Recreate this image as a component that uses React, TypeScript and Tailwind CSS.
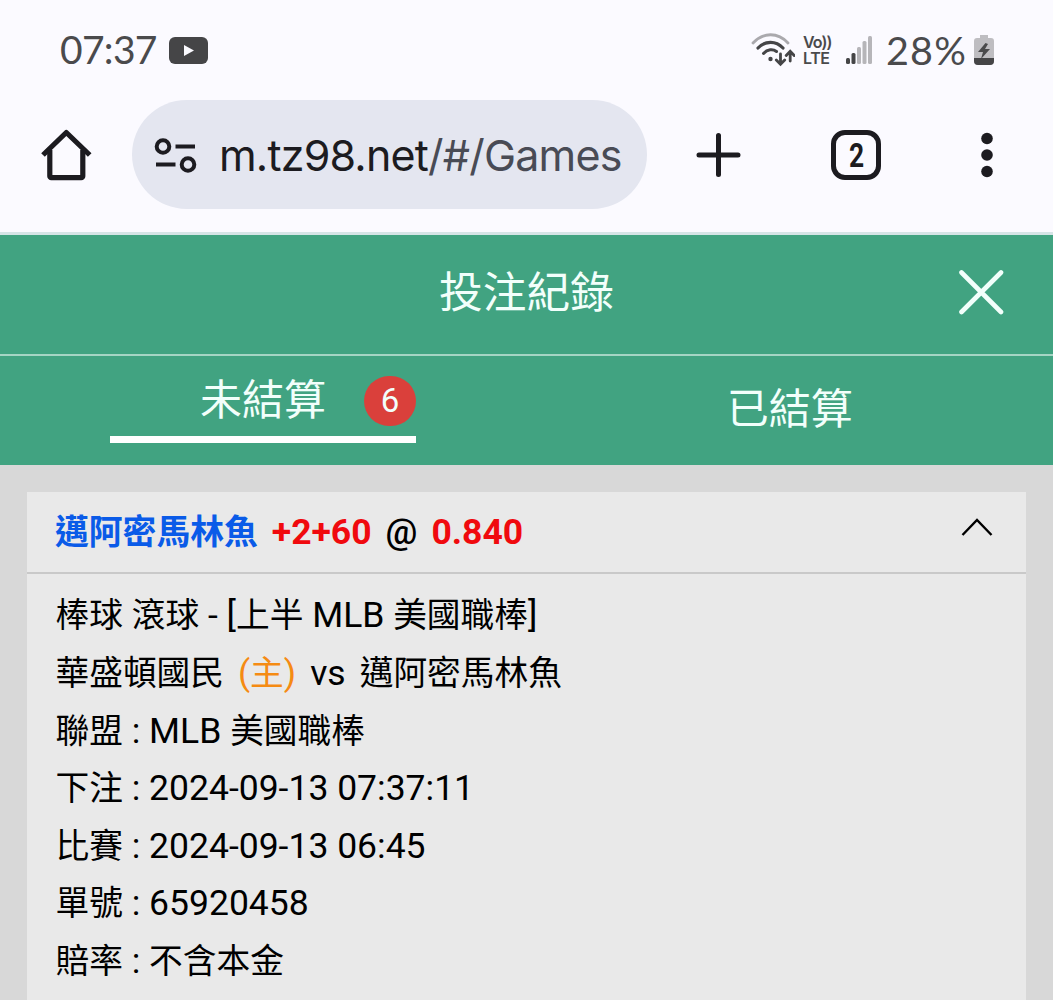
import { Fragment, ReactNode } from 'react';

const details = [
  { label: '聯盟', value: 'MLB 美國職棒' },
  { label: '下注', value: '2024-09-13 07:37:11' },
  { label: '比賽', value: '2024-09-13 06:45' },
  { label: '單號', value: '65920458' },
  { label: '賠率', value: '不含本金' },
];

// Han characters are set slightly smaller than the Latin text beside them
function Mixed({ text }: { text: string }) {
  return (
    <>
      {text.split(/([\u4e00-\u9fff]+)/).map((part, i) =>
        i % 2 ? <span key={i} className="text-[33.7px]">{part}</span> : <Fragment key={i}>{part}</Fragment>
      )}
    </>
  );
}

function Row({ children }: { children: ReactNode }) {
  return <div className="h-[57.6px] leading-[57.6px] whitespace-pre">{children}</div>;
}

function StatusBar() {
  return (
    <div className="h-[100px] pl-[60px] pr-[58px] flex items-center justify-between text-[#4a4a4c] font-['Lato',sans-serif]">
      <div className="flex items-center">
        <span className="w-[109px] text-[39px] leading-none tracking-[-0.7px] pb-px">07:37</span>
        <svg width="39" height="27" viewBox="0 0 39 27">
          <rect width="39" height="27" rx="6" fill="#454547" />
          <path d="M15 8l10 5.500L15 19z" fill="#fbfaff" />
        </svg>
      </div>
      <div className="flex items-center">
        <svg width="44" height="34" viewBox="0 0 44 34" fill="none" strokeLinecap="round">
          <path d="M2 10C12-1 27-1 37 10" stroke="#aaa9ad" strokeWidth="2.800" />
          <path d="M7 15C14 7.500 25 7.500 32 15" stroke="#454547" strokeWidth="3.200" />
          <path d="M12.500 20.500C16.500 16 22 15.800 25.500 18.500" stroke="#454547" strokeWidth="3" />
          <circle cx="19.500" cy="26" r="2.200" fill="#454547" />
          <path d="M29.500 21v10m-4.200-4 4.200 4.200 4.200-4.200M39.200 28V18.500m-4 4 4-4.200 4 4.200" stroke="#454547" strokeWidth="2.800" />
        </svg>
        <div className="ml-2 w-[32px] h-[32px] flex flex-col justify-between text-[16px] leading-[16px] font-semibold font-['Inter',sans-serif] whitespace-nowrap">
          <div className="tracking-[-0.9px]">Vo))</div>
          <div className="tracking-[-0.4px]">LTE</div>
        </div>
        <svg className="ml-[10px]" width="28" height="30" viewBox="0 0 28 30" fill="#b6b5b9">
          <rect x="1" y="23" width="4" height="6" rx="1.5" fill="#454547" />
          <rect x="6.500" y="18" width="4" height="11" rx="1.5" fill="#454547" />
          <rect x="12" y="12" width="4" height="17" rx="1.5" />
          <rect x="17.500" y="6" width="4" height="23" rx="1.5" />
          <rect x="23" y="1" width="4" height="28" rx="1.5" />
        </svg>
        <span className="ml-[13px] w-[87px] text-[39.5px] leading-none tracking-[1.2px] pb-px">28%</span>
        <svg width="22" height="30" viewBox="0 0 22 30">
          <path d="M7 0h8v3h3a3 3 0 0 1 3 3v20a4 4 0 0 1-4 4H5a4 4 0 0 1-4-4V6a3 3 0 0 1 3-3h3z" fill="#bebdc1" />
          <path d="M1 23h20v3a4 4 0 0 1-4 4H5a4 4 0 0 1-4-4z" fill="#454547" />
          <path d="M12.500 8 5 17h5l-2 7 9-10h-5l3-5z" fill="#4a4a4c" />
        </svg>
      </div>
    </div>
  );
}

function BrowserBar() {
  return (
    <div className="h-[135px] border-b-3 border-[#d5e4e6] flex items-start text-[#1c1b20]">
      <svg className="ml-[40px] mt-[28px]" width="52" height="54" viewBox="0 0 52 54" fill="none" stroke="currentColor" strokeWidth="5.200">
        <path d="M3 27 26.300 4.500 49.700 27" strokeLinejoin="round" />
        <path d="M9.800 22v26.200a1.500 1.500 0 0 0 1.500 1.500h30a1.500 1.500 0 0 0 1.500-1.500V22" />
      </svg>
      <div className="ml-[40px] w-[515px] h-[109px] rounded-full bg-[#e4e6f0] flex items-center">
        <svg className="ml-[22px]" width="44" height="38" viewBox="0 0 44 38" fill="none" stroke="currentColor" strokeWidth="4">
          <circle cx="9" cy="10.500" r="6.300" />
          <path d="M21.500 10.500h19.500M2 28.500h19.500" />
          <circle cx="34" cy="28.500" r="6.300" />
        </svg>
        <span className="ml-[21px] pt-[2px] text-[43px] leading-none whitespace-nowrap font-['Inter',sans-serif] tracking-[-0.8px]">
          m.tz98.net<span className="text-[#494b55]">/#/Games</span>
        </span>
      </div>
      <svg className="ml-[48px] mt-[32px]" width="46" height="46" viewBox="0 0 46 46" stroke="currentColor" strokeWidth="5" strokeLinecap="round">
        <path d="M23.500 3.500v39M4 23h39" />
      </svg>
      <div className="ml-[90px] mt-[30px] size-[50px] rounded-[14px] border-5 border-[#1c1b20] flex items-center justify-center text-[33px] leading-none font-bold font-['Roboto',sans-serif]">
        <span className="scale-x-80">2</span>
      </div>
      <svg className="ml-[99px] mt-[32px]" width="14" height="46" viewBox="0 0 14 46" fill="currentColor">
        <circle cx="7" cy="6.500" r="5.800" />
        <circle cx="7" cy="23" r="5.800" />
        <circle cx="7" cy="39.500" r="5.800" />
      </svg>
    </div>
  );
}

function Header() {
  return (
    <header className="bg-[#41a381] text-[#f2fffb]">
      <div className="h-[121px] border-b-2 border-[#a5d5c4] grid grid-cols-[1fr_auto_1fr] items-center">
        <span />
        <h1 className="text-[43.7px] leading-none pb-px">投注紀錄</h1>
        <svg className="justify-self-end mr-[49px] mb-[5px]" width="46" height="46" viewBox="0 0 46 46" stroke="currentColor" strokeWidth="4.600" strokeLinecap="round">
          <path d="M3.500 3.500l39.500 39.500M43 3.500 3.500 43" />
        </svg>
      </div>
      <nav className="h-[109px] grid grid-cols-2 text-[42px] leading-none">
        <div className="ml-[110px] mt-[20px] w-[306px] h-[67px] border-b-7 border-white flex justify-end">
          <span className="mt-[4px]">未結算</span>
          <span className="ml-[38px] w-[52px] h-[50px] rounded-full bg-[#da403b] flex items-center justify-center pb-px text-[33px]">6</span>
        </div>
        <div className="flex items-center justify-center pb-px">已結算</div>
      </nav>
    </header>
  );
}

function BetCard() {
  return (
    <section className="mx-[27px] mt-[27px] h-[600px] bg-[#e9e9e9] text-[35.5px] text-black">
      <div className="h-[82px] border-b-2 border-[#c9c9c9] pl-[28px] pr-[33px] flex items-center justify-between">
        <div className="font-bold whitespace-pre flex items-baseline pt-[2px]">
          <span className="text-[33.8px] text-[#0a5be8]">邁阿密馬林魚</span>
          <span className="ml-[14px] text-[#f00a0e]">+2+60</span>
          <span className="ml-[14px] font-medium">@</span>
          <span className="ml-[14px] text-[#f00a0e]">0.840</span>
        </div>
        <svg className="mb-[10px]" width="32" height="20" viewBox="0 0 32 20" fill="none" stroke="currentColor" strokeWidth="2.400">
          <path d="M1.500 18 16 3l14.500 15" />
        </svg>
      </div>
      <div className="pl-[28.5px] pt-[13.4px]">
        <Row><Mixed text="棒球 滾球 - [上半 MLB 美國職棒]" /></Row>
        <Row>
          <Mixed text="華盛頓國民" />
          <span className="ml-[14px] text-[#f58b13]"><Mixed text="(主)" /></span>
          <span className="mx-[14px]">vs</span>
          <Mixed text="邁阿密馬林魚" />
        </Row>
        {details.map(d => (
          <Row key={d.label}><Mixed text={`${d.label} : ${d.value}`} /></Row>
        ))}
      </div>
    </section>
  );
}

export default function App() {
  return (
    <div className="w-[1053px] h-[1000px] overflow-hidden bg-[#fbfaff] font-['Roboto','Noto_Sans_CJK_TC',sans-serif]">
      <StatusBar />
      <BrowserBar />
      <Header />
      <main className="flow-root bg-[#d8d8d8]">
        <BetCard />
      </main>
    </div>
  );
}
